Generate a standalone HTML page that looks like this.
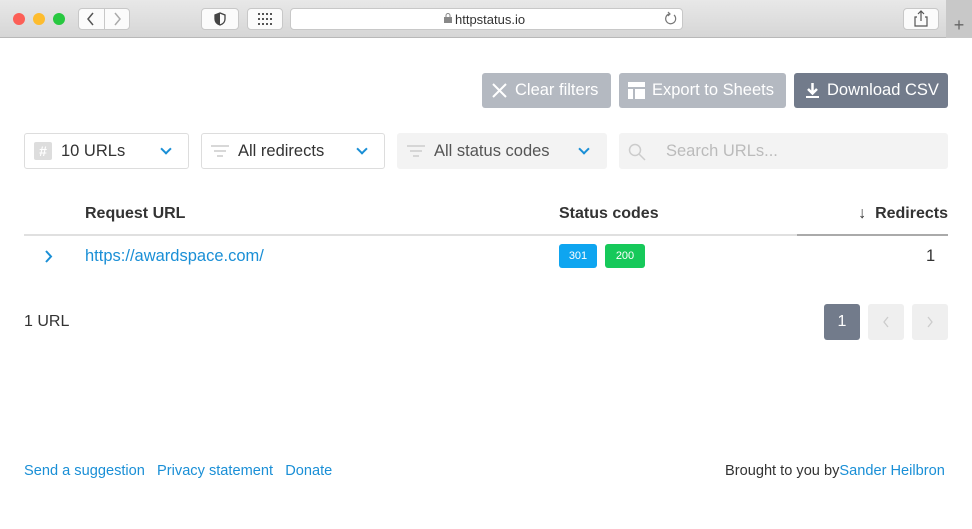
<!DOCTYPE html>
<html><head><style>
*{box-sizing:border-box;margin:0;padding:0}
body{width:972px;height:529px;background:#fff;font-family:"Liberation Sans",sans-serif;position:relative;overflow:hidden;color:#333}
.a{position:absolute}
.bar{left:0;top:0;width:972px;height:38px;background:linear-gradient(#e8e8e8,#d6d6d6);border-bottom:1px solid #b8b8b8}
.dot{width:12px;height:12px;border-radius:50%;top:13px}
.tb{background:#fbfbfb;border:1px solid #c8c8c8;border-radius:4px;height:22px;top:8px}
.btn{top:73px;height:35px;border-radius:3px;color:#fff;font-size:16.5px;line-height:35px}
.sel{top:133px;height:36px;border:1px solid #ddd;border-radius:3px;font-size:16.5px;line-height:34px}
.chev{width:8px;height:8px;border-right:2px solid #1a8fd6;border-bottom:2px solid #1a8fd6;transform:rotate(45deg);top:11px}
.lnk{color:#1a8fd6}
</style></head><body>
<div class="a bar"></div>
<div class="a dot" style="left:13px;background:#fc5f57"></div>
<div class="a dot" style="left:33px;background:#fdbc2e"></div>
<div class="a dot" style="left:53px;background:#28c840"></div>
<div class="a tb" style="left:78px;width:52px"></div>
<div class="a" style="left:104px;top:8px;width:1px;height:22px;background:#c8c8c8"></div>
<svg class="a" style="left:86px;top:12px" width="10" height="14"><path d="M7 1L2 7l5 6" stroke="#555" fill="none" stroke-width="1.5"/></svg>
<svg class="a" style="left:112px;top:12px" width="10" height="14"><path d="M3 1l5 6-5 6" stroke="#aaa" fill="none" stroke-width="1.5"/></svg>
<div class="a tb" style="left:201px;width:38px"></div>
<svg class="a" style="left:213px;top:12px" width="14" height="14"><path d="M7 1L2 3v4c0 3 2 5 5 6 3-1 5-3 5-6V3z" stroke="#444" fill="none" stroke-width="1.3"/><path d="M7 1v12c-3-1-5-3-5-6V3z" fill="#444"/></svg>
<div class="a tb" style="left:247px;width:36px"></div>
<svg class="a" style="left:258px;top:13px" width="14" height="12"><g fill="#555"><rect x="0" y="0" width="2" height="2"/><rect x="4" y="0" width="2" height="2"/><rect x="8" y="0" width="2" height="2"/><rect x="12" y="0" width="2" height="2"/><rect x="0" y="5" width="2" height="2"/><rect x="4" y="5" width="2" height="2"/><rect x="8" y="5" width="2" height="2"/><rect x="12" y="5" width="2" height="2"/><rect x="0" y="10" width="2" height="2"/><rect x="4" y="10" width="2" height="2"/><rect x="8" y="10" width="2" height="2"/><rect x="12" y="10" width="2" height="2"/></g></svg>
<div class="a tb" style="left:290px;width:393px;background:#fff"></div>
<svg class="a" style="left:444px;top:13px" width="8" height="10"><rect x="0" y="4" width="8" height="6" fill="#888"/><path d="M2 4V2.5a2 2 0 014 0V4" stroke="#888" fill="none"/></svg>
<div class="a" style="left:455px;top:12px;font-size:13px;color:#333">httpstatus.io</div>
<svg class="a" style="left:664px;top:11px" width="14" height="15"><path d="M10 4a5 5 0 11-5-1" stroke="#777" fill="none" stroke-width="1.2"/><path d="M4 1l2 2-2 2" stroke="#777" fill="none" stroke-width="1.2"/></svg>
<div class="a tb" style="left:903px;width:36px"></div>
<svg class="a" style="left:914px;top:10px" width="14" height="17"><path d="M3 7H1v9h12V7h-2M7 11V1M4 4l3-3 3 3" stroke="#555" fill="none" stroke-width="1.2"/></svg>
<div class="a" style="left:946px;top:0;width:26px;height:38px;background:#c8c8c8;font-size:18px;color:#666;text-align:center;line-height:50px">+</div>

<div class="a btn" style="left:482px;width:129px;background:#b4b9c1"><svg class="a" style="left:10px;top:10px" width="15" height="15"><path d="M1 1l13 13M14 1L1 14" stroke="#fff" stroke-width="2"/></svg><span class="a" style="left:33px">Clear filters</span></div>
<div class="a btn" style="left:619px;width:167px;background:#b4b9c1"><svg class="a" style="left:9px;top:9px" width="17" height="17"><rect width="17" height="17" fill="#fff"/><path d="M0 6h17M6 6v11" stroke="#b4b9c1" stroke-width="2"/></svg><span class="a" style="left:33px">Export to Sheets</span></div>
<div class="a btn" style="left:794px;width:154px;background:#727b8b"><svg class="a" style="left:11px;top:9px" width="15" height="17"><path d="M7.5 1v10M3 7l4.5 4.5L12 7" stroke="#fff" stroke-width="2.5" fill="none"/><path d="M1 15h13" stroke="#fff" stroke-width="2"/></svg><span class="a" style="left:33px">Download CSV</span></div>

<div class="a sel" style="left:24px;width:165px"><span class="a" style="left:9px;top:8px;width:18px;height:18px;background:#ddd;border-radius:2px;color:#fff;font-size:14px;line-height:18px;text-align:center;font-weight:bold">#</span><span class="a" style="left:36px">10 URLs</span><span class="a chev" style="left:137px"></span></div>
<div class="a sel" style="left:201px;width:184px"><svg class="a" style="left:9px;top:11px" width="18" height="12"><path d="M0 1h18M3 6h12M6 11h6" stroke="#ccc" stroke-width="1.5"/></svg><span class="a" style="left:36px">All redirects</span><span class="a chev" style="left:156px"></span></div>
<div class="a sel" style="left:397px;width:210px;background:#f3f3f3;border-color:#f3f3f3;color:#555"><svg class="a" style="left:9px;top:11px" width="18" height="12"><path d="M0 1h18M3 6h12M6 11h6" stroke="#ccc" stroke-width="1.5"/></svg><span class="a" style="left:36px">All status codes</span><span class="a chev" style="left:182px"></span></div>
<div class="a sel" style="left:619px;width:329px;background:#f3f3f3;border-color:#f3f3f3;color:#bbb"><svg class="a" style="left:8px;top:9px" width="18" height="18"><circle cx="7" cy="7" r="5.5" stroke="#ccc" stroke-width="1.5" fill="none"/><path d="M11 11l6 6" stroke="#ccc" stroke-width="1.5"/></svg><span class="a" style="left:46px">Search URLs...</span></div>

<div class="a" style="left:85px;top:205px;font-size:16px;font-weight:bold">Request URL</div>
<div class="a" style="left:559px;top:205px;font-size:16px;font-weight:bold">Status codes</div>
<div class="a" style="left:838px;top:205px;font-size:16px;font-weight:bold;width:110px;text-align:right"><span style="font-weight:normal">↓</span>&nbsp; Redirects</div>
<div class="a" style="left:24px;top:234px;width:924px;height:2px;background:#e0e0e0"></div>
<div class="a" style="left:797px;top:234px;width:151px;height:2px;background:#aaa"></div>
<svg class="a" style="left:44px;top:250px" width="10" height="13"><path d="M2 1l5 5.5L2 12" stroke="#1a8fd6" stroke-width="2" fill="none"/></svg>
<div class="a lnk" style="left:85px;top:247px;font-size:16.5px">https://awardspace.com/</div>
<div class="a" style="left:559px;top:244px;width:38px;height:24px;background:#0ea5f0;border-radius:3px;color:#fff;font-size:11px;text-align:center;line-height:24px">301</div>
<div class="a" style="left:605px;top:244px;width:40px;height:24px;background:#16c95a;border-radius:3px;color:#fff;font-size:11px;text-align:center;line-height:24px">200</div>
<div class="a" style="left:926px;top:247px;font-size:16.5px">1</div>

<div class="a" style="left:24px;top:313px;font-size:16px">1 URL</div>
<div class="a" style="left:824px;top:304px;width:36px;height:36px;background:#727b8b;border-radius:3px;color:#fff;text-align:center;line-height:36px;font-size:16px">1</div>
<div class="a" style="left:868px;top:304px;width:36px;height:36px;background:#efefef;border-radius:3px"><svg class="a" style="left:14px;top:12px" width="8" height="12"><path d="M6 1L2 6l4 5" stroke="#ccc" stroke-width="1.3" fill="none"/></svg></div>
<div class="a" style="left:912px;top:304px;width:36px;height:36px;background:#efefef;border-radius:3px"><svg class="a" style="left:14px;top:12px" width="8" height="12"><path d="M2 1l4 5-4 5" stroke="#ccc" stroke-width="1.3" fill="none"/></svg></div>

<div class="a lnk" style="left:24px;top:463px;font-size:14.6px">Send a suggestion&nbsp;&nbsp; Privacy statement&nbsp;&nbsp; Donate</div>
<div class="a" style="left:725px;top:463px;font-size:14.6px">Brought to you by<span class="lnk">Sander Heilbron</span></div>
</body></html>
